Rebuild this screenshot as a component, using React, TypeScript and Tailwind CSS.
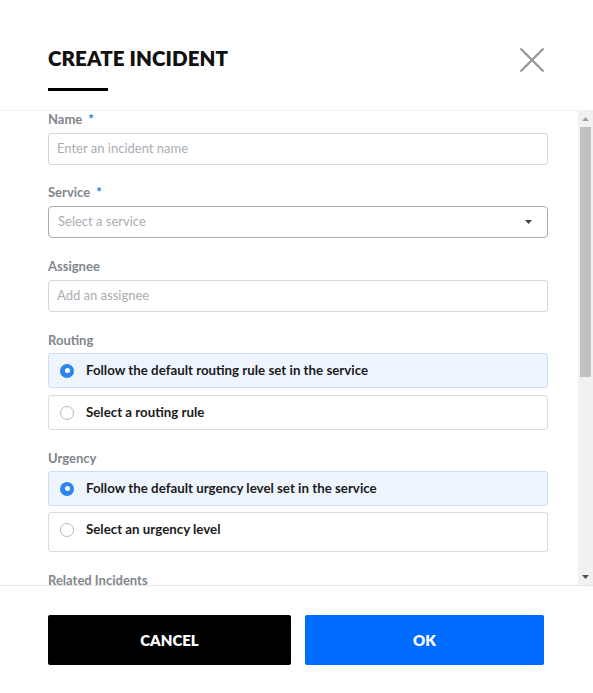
import React from 'react'

const labelCls = 'h-4 leading-4 text-[13px] font-bold text-[#80868e]'

function Label({ text, required }: { text: string; required?: boolean }) {
  return (
    <div className={labelCls}>
      {text}
      {required && <span className="ml-[6px] text-[#1a73e8]">*</span>}
    </div>
  )
}

function Radio({ checked }: { checked: boolean }) {
  return checked ? (
    <span className="flex h-[14px] w-[14px] shrink-0 items-center justify-center rounded-full bg-[#2b86f0]">
      <span className="h-[5px] w-[5px] rounded-full bg-white" />
    </span>
  ) : (
    <span className="h-[14px] w-[14px] shrink-0 rounded-full border border-[#b9b9b9] bg-white" />
  )
}

function Option({ text, checked, tall }: { text: string; checked?: boolean; tall?: boolean }) {
  return (
    <div
      className={`rounded-[3px] border ${
        checked ? 'border-[#c9def7] bg-[#eef5fe]' : 'border-[#dcdcdc] bg-white'
      } ${tall ? 'pb-[5px]' : ''}`}
    >
      <div className="flex h-[33px] items-center gap-[12px] pl-[11px]">
        <Radio checked={!!checked} />
        <span className="text-[13.3px] font-bold text-[#1b1b1b]">{text}</span>
      </div>
    </div>
  )
}

function TextInput({ placeholder }: { placeholder: string }) {
  return (
    <div className="flex h-[32px] items-center rounded-[3px] border border-[#d5d7dc] px-[8px] text-[13px] text-[#a9adb3]">
      {placeholder}
    </div>
  )
}

function ScrollBar() {
  return (
    <div className="flex w-[15px] shrink-0 flex-col items-center bg-[#f1f1f1]">
      <div className="flex h-[16px] items-center justify-center">
        <svg width="7" height="4" viewBox="0 0 7 4">
          <path d="M0 4 H7 L3.5 0 Z" fill="#a3a3a3" />
        </svg>
      </div>
      <div className="h-[250px] w-[11px] bg-[#c1c1c1]" />
      <div className="flex-1" />
      <div className="flex h-[16px] items-center justify-center">
        <svg width="7" height="4" viewBox="0 0 7 4">
          <path d="M0 0 H7 L3.5 4 Z" fill="#505050" />
        </svg>
      </div>
    </div>
  )
}

export default function App() {
  return (
    <div
      className="flex h-[693px] w-[593px] flex-col bg-white"
      style={{ fontFamily: 'Lato, "Noto Sans", sans-serif' }}
    >
      {/* Header */}
      <div className="h-[110px] shrink-0 pl-12 pr-[48px] pt-[44px]">
        <div className="flex items-start justify-between">
          <h1 className="text-[20.5px] font-extrabold leading-[28px] tracking-[0.1px] text-[#111]">
            CREATE INCIDENT
          </h1>
          <svg width="26" height="26" viewBox="0 0 26 26" className="mt-[3px]">
            <path d="M1.5 1.5 L24.5 24.5 M24.5 1.5 L1.5 24.5" stroke="#9a9a9a" strokeWidth="2.4" />
          </svg>
        </div>
        <div className="mt-[15px] h-[3px] w-[60px] bg-black" />
      </div>

      {/* Scrollable body */}
      <div className="flex min-h-0 flex-1 border-t border-b border-t-[#f2f2f2] border-b-[#e6e6e6]">
        <div className="min-w-0 flex-1 overflow-hidden pl-12 pr-[30px]">
          <Label text="Name" required />
          <div className="mt-[6px]">
            <TextInput placeholder="Enter an incident name" />
          </div>

          <div className="mt-[19px]">
            <Label text="Service" required />
          </div>
          <div className="mt-[6px] flex h-[32px] items-center justify-between rounded-[4px] border border-[#a7abb2] px-[9px] text-[13px] text-[#a9adb3]">
            Select a service
            <svg width="7" height="4" viewBox="0 0 7 4" className="mr-[6px]">
              <path d="M0 0 H7 L3.5 4 Z" fill="#444" />
            </svg>
          </div>

          <div className="mt-[20px]">
            <Label text="Assignee" />
          </div>
          <div className="mt-[6px]">
            <TextInput placeholder="Add an assignee" />
          </div>

          <div className="mt-[20px]">
            <Label text="Routing" />
          </div>
          <div className="mt-[5px] flex flex-col gap-[7px]">
            <Option text="Follow the default routing rule set in the service" checked />
            <Option text="Select a routing rule" />
          </div>

          <div className="mt-[20px]">
            <Label text="Urgency" />
          </div>
          <div className="mt-[5px] flex flex-col gap-[6px]">
            <Option text="Follow the default urgency level set in the service" checked />
            <Option text="Select an urgency level" tall />
          </div>

          <div className="mt-[20px]">
            <Label text="Related Incidents" />
          </div>
          <div className="mt-[6px]">
            <TextInput placeholder="Search incidents" />
          </div>
        </div>
        <ScrollBar />
      </div>

      {/* Footer */}
      <div className="flex h-[107px] shrink-0 gap-[14px] pl-12 pt-[29px]">
        <button className="h-[50px] w-[243px] rounded-[2px] bg-black text-[15px] font-extrabold text-white">
          CANCEL
        </button>
        <button className="h-[50px] w-[239px] rounded-[2px] bg-[#006cff] text-[15px] font-extrabold text-white">
          OK
        </button>
      </div>
    </div>
  )
}
